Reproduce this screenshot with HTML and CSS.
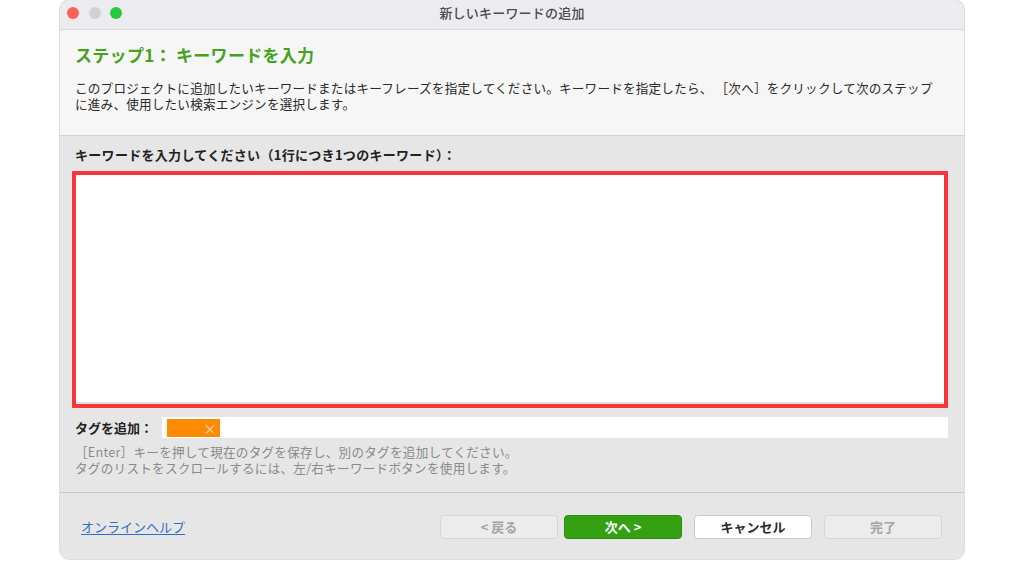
FILE: index.html
```html
<!DOCTYPE html>
<html lang="ja">
<head>
<meta charset="utf-8">
<title>新しいキーワードの追加</title>
<link rel="stylesheet" href="styles.css">
</head>
<body>
<div class="window">
  <div class="titlebar">
    <div class="lights">
      <span class="light red"></span>
      <span class="light grey"></span>
      <span class="light green"></span>
    </div>
    <div class="title">新しいキーワードの追加</div>
  </div>
  <div class="header">
    <h1 class="heading">ステップ1： キーワードを入力</h1>
    <div class="desc">
      <div class="line">このプロジェクトに追加したいキーワードまたはキーフレーズを指定してください。キーワードを指定したら、 ［次へ］をクリックして次のステップ</div>
      <div class="line">に進み、使用したい検索エンジンを選択します。</div>
    </div>
  </div>
  <div class="content">
    <div class="label">キーワードを入力してください（1行につき1つのキーワード）：</div>
    <div class="textarea"></div>
    <div class="tagrow">
      <div class="taglabel">タグを追加：</div>
      <div class="taginput"><span class="tag"><span class="tagx">×</span></span></div>
    </div>
    <div class="help">
      <div class="line">［Enter］キーを押して現在のタグを保存し、別のタグを追加してください。</div>
      <div class="line">タグのリストをスクロールするには、左/右キーワードボタンを使用します。</div>
    </div>
  </div>
  <div class="footer">
    <a class="helplink" href="#">オンラインヘルプ</a>
    <div class="buttons">
      <button class="btn disabled">&lt; 戻る</button>
      <button class="btn primary">次へ &gt;</button>
      <button class="btn normal gap">キャンセル</button>
      <button class="btn disabled gap">完了</button>
    </div>
  </div>
</div>
</body>
</html>
```

FILE: styles.css
```css
* { box-sizing: border-box; }
html, body { margin: 0; padding: 0; background: #ffffff; }
body {
  font-family: "Noto Sans CJK JP", "Noto Sans", sans-serif;
  width: 1024px;
  height: 561px;
  overflow: hidden;
}
.window {
  margin-left: 60px;
  width: 904px;
  height: 559px;
  border-radius: 10px;
  overflow: hidden;
  box-shadow: 0 0 0 1px rgba(0,0,0,0.13);
  display: flex;
  flex-direction: column;
  background: #e6e6e6;
}
.titlebar {
  height: 30px;
  flex: none;
  background: #ecebef;
  border-bottom: 1px solid #d9d8dc;
  display: flex;
  align-items: center;
  position: relative;
}
.lights {
  display: flex;
  gap: 9.5px;
  padding-left: 7px;
  margin-top: -3px;
}
.light {
  width: 12px;
  height: 12px;
  border-radius: 50%;
  display: block;
}
.light.red { background: #fe5f57; }
.light.grey { background: #d1d0d4; }
.light.green { background: #28c840; }
.title {
  position: absolute;
  left: 0;
  right: 0;
  top: 3px;
  text-align: center;
  font-size: 13px;
  line-height: 20px;
  font-weight: 500;
  color: #4b4a4e;
  letter-spacing: 0.2px;
}
.header {
  flex: none;
  height: 106px;
  background: #f6f6f6;
  border-bottom: 1px solid #d2d2d2;
  padding: 13px 12px 0 15px;
}
.heading {
  margin: 0;
  font-size: 17px;
  line-height: 24px;
  font-weight: 700;
  color: #45a11e;
  letter-spacing: 0.3px;
}
.desc {
  margin-top: 13px;
  font-size: 12.6px;
  color: #2a2a2a;
  letter-spacing: 0.2px;
  white-space: nowrap;
}
.line {
  height: 16px;
  line-height: 16px;
}
.content {
  flex: none;
  height: 357px;
  background: #e6e6e6;
  border-bottom: 1px solid #c9c9c9;
  padding: 10px 16px 0 12px;
}
.label {
  padding-left: 3px;
  font-size: 13px;
  line-height: 18px;
  font-weight: 700;
  color: #222;
  letter-spacing: 0.3px;
}
.textarea {
  margin-top: 7px;
  height: 237px;
  background: #ffffff;
  border: 4px solid #f5363d;
  box-shadow: inset 0 -2px 0 #dedede;
}
.tagrow {
  margin-top: 9px;
  display: flex;
  align-items: center;
  height: 21px;
}
.taglabel {
  width: 90px;
  padding-left: 3px;
  font-size: 13px;
  font-weight: 700;
  color: #222;
  line-height: 21px;
}
.taginput {
  flex: 1;
  height: 21px;
  background: #ffffff;
  display: flex;
  align-items: center;
  padding-left: 5px;
}
.tag {
  width: 53px;
  height: 18px;
  background: #fd8a00;
  display: flex;
  align-items: center;
  justify-content: flex-end;
  padding-right: 3px;
}
.tagx {
  color: #ffc889;
  font-size: 14px;
  line-height: 18px;
  font-weight: 700;
}
.help {
  margin-top: 6px;
  padding-left: 3px;
  font-size: 12.6px;
  color: #8a8a8a;
  letter-spacing: 0.25px;
  white-space: nowrap;
}
.footer {
  flex: 1;
  background: #e6e6e6;
  display: flex;
  align-items: flex-start;
  justify-content: space-between;
  padding: 22px 22px 0 21px;
}
.helplink {
  margin-top: 3px;
  font-size: 13px;
  line-height: 18px;
  color: #2b6ec3;
  text-decoration: underline;
  text-underline-offset: 2px;
}
.buttons {
  display: flex;
  gap: 6px;
}
.btn {
  width: 118px;
  height: 24px;
  border-radius: 4px;
  font-family: "Noto Sans CJK JP", "Noto Sans", sans-serif;
  font-size: 13px;
  font-weight: 700;
  line-height: 20px;
  padding: 0;
  border: 1px solid #d3d3d3;
}
.btn.gap { margin-left: 6px; }
.btn.disabled {
  background: #ececec;
  color: #a5a5a5;
  border-color: #d6d6d6;
}
.btn.primary {
  background: #33a112;
  color: #ffffff;
  border-color: #2b8c0e;
}
.btn.normal {
  background: #ffffff;
  color: #2a2a2a;
  border-color: #cacaca;
}
```
